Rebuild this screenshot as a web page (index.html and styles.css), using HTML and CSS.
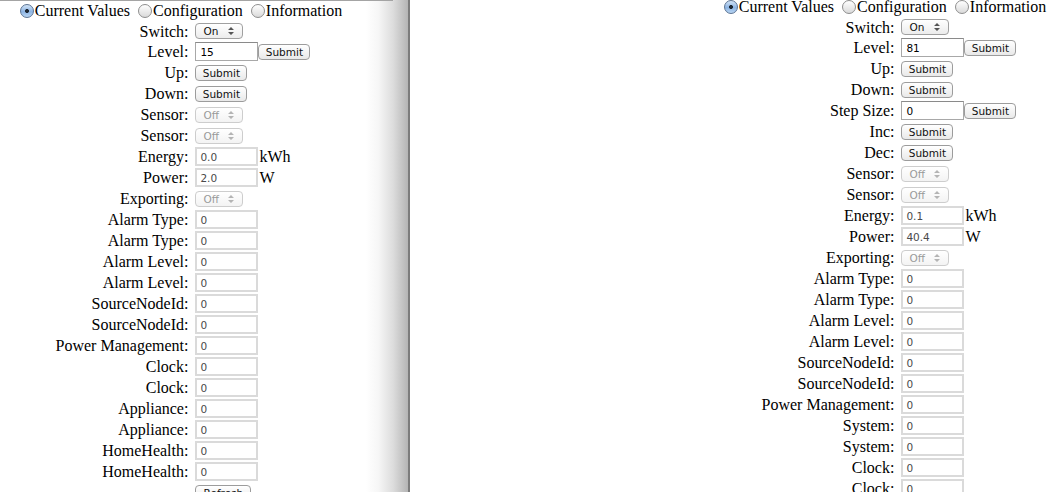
FILE: index.html
```html
<!DOCTYPE html>
<html>
<head>
<meta charset="utf-8">
<title>Device</title>
<link rel="stylesheet" href="styles.css">
</head>
<body>
<div class="desk">
  <div class="win win-left">
    <div class="page page-left">
      <form class="tabs">
        <label class="tab"><input type="radio" name="t1" checked>Current Values</label>
        <label class="tab"><input type="radio" name="t1">Configuration</label>
        <label class="tab"><input type="radio" name="t1">Information</label>
      </form>
      <div class="grid">
        <span class="lab">Switch:</span><span class="ctl"><span class="sel">On<svg class="arr" width="6" height="8" viewBox="0 0 6 8"><path d="M3 0L6 3H0z M3 8L0 5H6z"/></svg></span></span>
        <span class="lab">Level:</span><span class="ctl"><input class="txt edit" value="15"><button class="btn">Submit</button></span>
        <span class="lab">Up:</span><span class="ctl"><button class="btn">Submit</button></span>
        <span class="lab">Down:</span><span class="ctl"><button class="btn">Submit</button></span>
        <span class="lab">Sensor:</span><span class="ctl"><span class="sel dis">Off<svg class="arr" width="6" height="8" viewBox="0 0 6 8"><path d="M3 0L6 3H0z M3 8L0 5H6z"/></svg></span></span>
        <span class="lab">Sensor:</span><span class="ctl"><span class="sel dis">Off<svg class="arr" width="6" height="8" viewBox="0 0 6 8"><path d="M3 0L6 3H0z M3 8L0 5H6z"/></svg></span></span>
        <span class="lab">Energy:</span><span class="ctl"><input class="txt ro" value="0.0" readonly><span class="unit">kWh</span></span>
        <span class="lab">Power:</span><span class="ctl"><input class="txt ro" value="2.0" readonly><span class="unit">W</span></span>
        <span class="lab">Exporting:</span><span class="ctl"><span class="sel dis">Off<svg class="arr" width="6" height="8" viewBox="0 0 6 8"><path d="M3 0L6 3H0z M3 8L0 5H6z"/></svg></span></span>
        <span class="lab">Alarm Type:</span><span class="ctl"><input class="txt ro" value="0" readonly></span>
        <span class="lab">Alarm Type:</span><span class="ctl"><input class="txt ro" value="0" readonly></span>
        <span class="lab">Alarm Level:</span><span class="ctl"><input class="txt ro" value="0" readonly></span>
        <span class="lab">Alarm Level:</span><span class="ctl"><input class="txt ro" value="0" readonly></span>
        <span class="lab">SourceNodeId:</span><span class="ctl"><input class="txt ro" value="0" readonly></span>
        <span class="lab">SourceNodeId:</span><span class="ctl"><input class="txt ro" value="0" readonly></span>
        <span class="lab">Power Management:</span><span class="ctl"><input class="txt ro" value="0" readonly></span>
        <span class="lab">Clock:</span><span class="ctl"><input class="txt ro" value="0" readonly></span>
        <span class="lab">Clock:</span><span class="ctl"><input class="txt ro" value="0" readonly></span>
        <span class="lab">Appliance:</span><span class="ctl"><input class="txt ro" value="0" readonly></span>
        <span class="lab">Appliance:</span><span class="ctl"><input class="txt ro" value="0" readonly></span>
        <span class="lab">HomeHealth:</span><span class="ctl"><input class="txt ro" value="0" readonly></span>
        <span class="lab">HomeHealth:</span><span class="ctl"><input class="txt ro" value="0" readonly></span>
        <span class="lab"></span><span class="ctl"><button class="btn btn-refresh">Refresh</button></span>
      </div>
    </div>
    <div class="shadow"></div>
    <div class="edge"></div>
  </div>
  <div class="win win-right">
    <div class="page page-right">
      <form class="tabs">
        <label class="tab"><input type="radio" name="t2" checked>Current Values</label>
        <label class="tab"><input type="radio" name="t2">Configuration</label>
        <label class="tab"><input type="radio" name="t2">Information</label>
      </form>
      <div class="grid">
        <span class="lab">Switch:</span><span class="ctl"><span class="sel">On<svg class="arr" width="6" height="8" viewBox="0 0 6 8"><path d="M3 0L6 3H0z M3 8L0 5H6z"/></svg></span></span>
        <span class="lab">Level:</span><span class="ctl"><input class="txt edit" value="81"><button class="btn">Submit</button></span>
        <span class="lab">Up:</span><span class="ctl"><button class="btn">Submit</button></span>
        <span class="lab">Down:</span><span class="ctl"><button class="btn">Submit</button></span>
        <span class="lab">Step Size:</span><span class="ctl"><input class="txt edit" value="0"><button class="btn">Submit</button></span>
        <span class="lab">Inc:</span><span class="ctl"><button class="btn">Submit</button></span>
        <span class="lab">Dec:</span><span class="ctl"><button class="btn">Submit</button></span>
        <span class="lab">Sensor:</span><span class="ctl"><span class="sel dis">Off<svg class="arr" width="6" height="8" viewBox="0 0 6 8"><path d="M3 0L6 3H0z M3 8L0 5H6z"/></svg></span></span>
        <span class="lab">Sensor:</span><span class="ctl"><span class="sel dis">Off<svg class="arr" width="6" height="8" viewBox="0 0 6 8"><path d="M3 0L6 3H0z M3 8L0 5H6z"/></svg></span></span>
        <span class="lab">Energy:</span><span class="ctl"><input class="txt ro" value="0.1" readonly><span class="unit">kWh</span></span>
        <span class="lab">Power:</span><span class="ctl"><input class="txt ro" value="40.4" readonly><span class="unit">W</span></span>
        <span class="lab">Exporting:</span><span class="ctl"><span class="sel dis">Off<svg class="arr" width="6" height="8" viewBox="0 0 6 8"><path d="M3 0L6 3H0z M3 8L0 5H6z"/></svg></span></span>
        <span class="lab">Alarm Type:</span><span class="ctl"><input class="txt ro" value="0" readonly></span>
        <span class="lab">Alarm Type:</span><span class="ctl"><input class="txt ro" value="0" readonly></span>
        <span class="lab">Alarm Level:</span><span class="ctl"><input class="txt ro" value="0" readonly></span>
        <span class="lab">Alarm Level:</span><span class="ctl"><input class="txt ro" value="0" readonly></span>
        <span class="lab">SourceNodeId:</span><span class="ctl"><input class="txt ro" value="0" readonly></span>
        <span class="lab">SourceNodeId:</span><span class="ctl"><input class="txt ro" value="0" readonly></span>
        <span class="lab">Power Management:</span><span class="ctl"><input class="txt ro" value="0" readonly></span>
        <span class="lab">System:</span><span class="ctl"><input class="txt ro" value="0" readonly></span>
        <span class="lab">System:</span><span class="ctl"><input class="txt ro" value="0" readonly></span>
        <span class="lab">Clock:</span><span class="ctl"><input class="txt ro" value="0" readonly></span>
        <span class="lab">Clock:</span><span class="ctl"><input class="txt ro" value="0" readonly></span>
        <span class="lab"></span><span class="ctl"><button class="btn btn-refresh">Refresh</button></span>
      </div>
    </div>
  </div>
</div>
</body>
</html>
```
FILE: styles.css
```css
html, body {
  margin: 0;
  padding: 0;
  background: #fff;
  overflow: hidden;
}
body {
  width: 1058px;
  height: 492px;
  font-family: "Liberation Serif", "Times New Roman", serif;
  font-size: 16px;
  color: #000;
}
.desk {
  display: flex;
  align-items: flex-start;
  height: 492px;
  overflow: hidden;
}
.win {
  display: flex;
  flex-shrink: 0;
  height: 492px;
  overflow: hidden;
}
.win-left {
  position: relative;
}
.win-left::before {
  content: "";
  position: absolute;
  left: 0;
  top: 0;
  width: 393px;
  height: 1px;
  background: #a4a4a4;
}
.page {
  flex-shrink: 0;
  padding-top: 1px;
  box-sizing: border-box;
}
.page-left {
  width: 366px;
}
.shadow {
  width: 42px;
  height: 492px;
  background: linear-gradient(to right, #ffffff 0%, #f6f6f6 30%, #dcdcdc 65%, #b4b4b4 100%);
}
.edge {
  width: 2px;
  height: 492px;
  background: #7c7c7c;
}
.win-right {
  flex: 1;
}
.page-right {
  width: 958px;
  margin-top: -4px;
}
.tabs {
  margin: 0;
  height: 19px;
  padding-right: 4px;
  line-height: 19px;
  text-align: center;
  white-space: nowrap;
}
.page-right .tabs {
  padding-right: 8px;
}
.tab {
  margin-right: 4px;
}
.tab:last-child {
  margin-right: 0;
}
.tab input {
  -webkit-appearance: none;
  appearance: none;
  width: 14px;
  height: 14px;
  margin: 0 1px 0 0;
  border: 1px solid #8e8e8e;
  border-radius: 50%;
  box-sizing: border-box;
  background: linear-gradient(#ffffff, #dadada);
  vertical-align: -2px;
}
.tab input:checked {
  border-color: #5b7393;
  background: radial-gradient(circle at 50% 50%, #1d2733 0, #1d2733 1.6px, transparent 2.3px),
              linear-gradient(#d2e4f7, #8db4e3 55%, #b8d5f3);
}
.grid {
  display: grid;
  grid-template-columns: auto auto;
  grid-template-rows: 18px;
  justify-content: center;
  column-gap: 7px;
  row-gap: 2px;
  grid-auto-rows: 19px;
  margin-top: 2px;
}
.lab {
  text-align: right;
  line-height: 19px;
  white-space: nowrap;
}
.ctl {
  display: flex;
  align-items: center;
  white-space: nowrap;
}
.sel {
  display: inline-flex;
  align-items: center;
  justify-content: space-between;
  width: 48px;
  height: 16px;
  box-sizing: border-box;
  padding: 0 8px 0 7px;
  border: 1px solid #a0a0a0;
  border-radius: 4px;
  background: linear-gradient(#ffffff, #ececec);
  font-family: "DejaVu Sans", Verdana, sans-serif;
  font-size: 10.5px;
  color: #111;
}
.sel .arr {
  fill: #555;
}
.sel.dis {
  color: #9a9a9a;
  border-color: #cdcdcd;
  background: linear-gradient(#ffffff, #f3f3f3);
}
.sel.dis .arr {
  fill: #b4b4b4;
}
.txt {
  width: 63px;
  height: 19px;
  box-sizing: border-box;
  margin: 0;
  padding: 0 0 0 3px;
  font-family: "DejaVu Sans", Verdana, sans-serif;
  font-size: 10.5px;
  outline: none;
}
.txt.edit {
  border: 1px solid #a8a8a8;
  border-top-color: #8a8a8a;
  color: #000;
  padding-left: 4px;
}
.txt.ro {
  border: 2px solid #dadada;
  color: #4a4a4a;
}
.btn {
  height: 16px;
  width: 52px;
  box-sizing: border-box;
  margin: 0;
  padding: 0;
  border: 1px solid #9c9c9c;
  border-radius: 4px;
  background: linear-gradient(#ffffff, #e9e9e9);
  font-family: "DejaVu Sans", Verdana, sans-serif;
  font-size: 10.5px;
  line-height: 14px;
  color: #111;
}
.btn-refresh {
  width: 56px;
}
.unit {
  margin-left: 1px;
  line-height: 19px;
}
```
